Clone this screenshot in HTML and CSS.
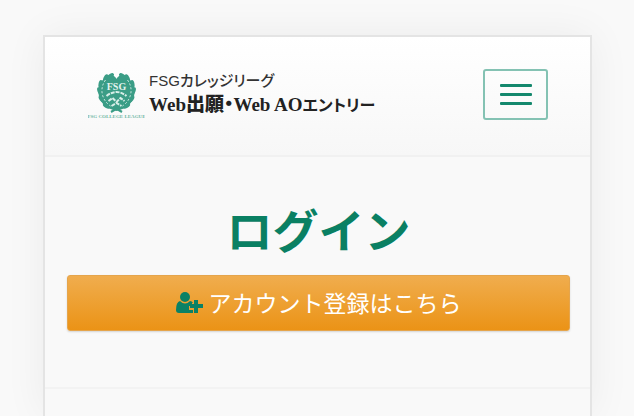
FILE: index.html
```html
<!DOCTYPE html>
<html lang="ja">
<head>
  <meta charset="UTF-8">
  <meta name="viewport" content="width=device-width, initial-scale=1">
  <title>ログイン</title>
  <link rel="stylesheet" href="styles.css">
</head>
<body>
  <div class="container">
    <header class="navbar">
      <a class="brand" href="#">
        <svg class="emblem" viewBox="0 0 56 50" aria-hidden="true">
          <g fill="#3b9d86">
            <path d="M24 4c-7 0-13 7-14 14-1 9 4 17 12 20l6 2 6-2c8-3 13-11 12-20-1-7-7-14-14-14l-4 3z"/>
          </g>
          <g fill="#3b9d86">
            <ellipse cx="22" cy="5" rx="4" ry="2" transform="rotate(-35 22 5)"/>
            <ellipse cx="17" cy="7" rx="4" ry="2" transform="rotate(-65 17 7)"/>
            <ellipse cx="12" cy="13" rx="4" ry="2" transform="rotate(-80 12 13)"/>
            <ellipse cx="11" cy="20" rx="4" ry="2" transform="rotate(70 11 20)"/>
            <ellipse cx="13" cy="28" rx="4" ry="2" transform="rotate(55 13 28)"/>
            <ellipse cx="18" cy="35" rx="4" ry="2" transform="rotate(30 18 35)"/>
            <ellipse cx="34" cy="5" rx="4" ry="2" transform="rotate(35 34 5)"/>
            <ellipse cx="39" cy="7" rx="4" ry="2" transform="rotate(65 39 7)"/>
            <ellipse cx="44" cy="13" rx="4" ry="2" transform="rotate(80 44 13)"/>
            <ellipse cx="45" cy="20" rx="4" ry="2" transform="rotate(-70 45 20)"/>
            <ellipse cx="43" cy="28" rx="4" ry="2" transform="rotate(-55 43 28)"/>
            <ellipse cx="38" cy="35" rx="4" ry="2" transform="rotate(-30 38 35)"/>
            <path d="M22 40l6-4 6 4-1 2-5-3-5 3z"/>
          </g>
          <path d="M25 2l3 6 3-6z" fill="#fdfdfd"/>
          <g fill="none" stroke="#d8eee8">
            <path d="M17 9q-5 7-3 15 2 7 8 11M39 9q5 7 3 15-2 7-8 11" stroke-dasharray="2 2"/>
            <path d="M18 25q10-8 20 0M20 30l4-3 4 4 4-4 4 3M23 35l5-3 5 3" stroke-width="2" stroke-dasharray="4 1"/>
          </g>
          <text class="emblem-letters" x="28" y="19" text-anchor="middle">FSG</text>
          <text class="emblem-name" x="28" y="47" text-anchor="middle">FSG COLLEGE LEAGUE</text>
        </svg>
        <span class="brand-text">
          <span class="brand-group">FSGカレッジリーグ</span>
          <span class="brand-title">Web<span class="kanji">出願・</span>Web AO<span class="kana">エントリー</span></span>
        </span>
      </a>
      <button class="menu-toggle" type="button" aria-label="メニュー">
        <span class="bar"></span>
        <span class="bar"></span>
        <span class="bar"></span>
      </button>
    </header>

    <section class="login">
      <h1>ログイン</h1>
      <button class="btn-register" type="button">
        <svg class="icon-user" viewBox="0 0 27 21" aria-hidden="true">
          <g fill="#0b8165">
            <circle cx="9" cy="5" r="5"/>
            <path d="M4 9q5 5 10 0 2 0 3 2h-1v3h-3v4h4v3H3q-3 0-3-3 0-8 4-9z"/>
            <path d="M18 8h4v4h5v4h-5v5h-4v-5h-4v-4h4z"/>
          </g>
        </svg>
        アカウント登録はこちら
      </button>
    </section>

    <section class="login-form"></section>
  </div>
</body>
</html>
```
FILE: styles.css
```css
* {
  box-sizing: border-box;
}

body {
  margin: 0;
  background: #f9f9f9;
  font-family: "Noto Sans CJK JP", sans-serif;
}

.container {
  margin: 35px 42px 0 43px;
  min-height: calc(100vh - 35px);
  border: 2px solid #e4e4e4;
  border-bottom: 0;
  background: #f9f9f9;
  box-shadow: 0 0 40px rgba(0, 0, 0, 0.06);
}

/* Header */
.navbar {
  display: flex;
  justify-content: space-between;
  align-items: flex-start;
  height: 120px;
  padding: 32px 42px 0 43px;
  background: linear-gradient(#ffffff, #f7f7f7);
  border-bottom: 2px solid #f1f1f1;
}

.brand {
  display: flex;
  align-items: flex-start;
  gap: 4px;
  color: #333;
  text-decoration: none;
  white-space: nowrap;
}

.emblem {
  width: 57px;
  height: 50px;
  margin-top: 2px;
}

.emblem-letters {
  font: bold 10px "Liberation Serif", serif;
  fill: #e6f4f0;
}

.emblem-name {
  font: bold 5px "Liberation Serif", serif;
  fill: #6fb7a5;
}

.brand-text {
  display: flex;
  flex-direction: column;
}

.brand-group {
  font-family: "Liberation Sans", "Noto Sans CJK JP", sans-serif;
  font-size: 15px;
  font-weight: 500;
  line-height: 24px;
  font-feature-settings: "palt";
}

.brand-title {
  font-family: "Liberation Serif", "Noto Sans CJK JP", serif;
  font-size: 19px;
  font-weight: bold;
  line-height: 24px;
  color: #222;
  font-feature-settings: "palt";
}

.kanji {
  font-size: 19px;
  font-weight: 900;
}

.kana {
  font-size: 16px;
}

.menu-toggle {
  display: flex;
  flex-direction: column;
  justify-content: center;
  align-items: center;
  gap: 6px;
  width: 65px;
  height: 51px;
  padding: 0;
  background: transparent;
  border: 2px solid #84c2b3;
  border-radius: 3px;
  cursor: pointer;
}

.bar {
  width: 32px;
  height: 3px;
  border-radius: 1px;
  background: #14886d;
}

/* Login */
.login {
  padding: 36px 20px 56px 22px;
  border-bottom: 2px solid #f3f3f3;
}

h1 {
  margin: 0 0 12px;
  color: #0a8063;
  font-size: 46px;
  font-weight: bold;
  line-height: 70px;
  text-align: center;
}

.btn-register {
  display: flex;
  justify-content: center;
  align-items: center;
  gap: 6px;
  width: 100%;
  height: 56px;
  padding: 0 0 2px;
  color: #fff;
  font-family: inherit;
  font-size: 23px;
  line-height: 36px;
  background: linear-gradient(#f0ad4e, #eb9316);
  border: 1px solid #e5a54c;
  border-radius: 3px;
  box-shadow: 0 1px 2px rgba(0, 0, 0, 0.15);
  cursor: pointer;
}

.icon-user {
  width: 27px;
  height: 21px;
}
```
